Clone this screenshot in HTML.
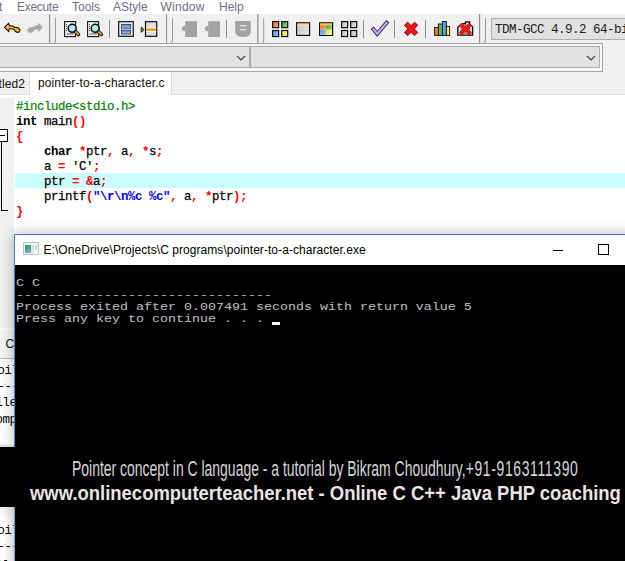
<!DOCTYPE html>
<html><head><meta charset="utf-8"><title>pointer-to-a-character.c - Dev-C++</title>
<style>
html,body{margin:0;padding:0;}
body{width:625px;height:561px;overflow:hidden;position:relative;background:#fff;font-family:"Liberation Sans",sans-serif;}
.abs{position:absolute;}
#menubar{left:0;top:0;width:625px;height:14px;background:#fff;}
#menubar span{position:absolute;top:0px;font-size:12px;line-height:14px;color:#6e6e84;white-space:nowrap;}
#toolbar{left:0;top:14px;width:625px;height:29px;background:#f0f0f0;}
.sep{position:absolute;width:1px;background:#a0a0a0;}
.grip{position:absolute;width:1px;background:#b8b8b8;}
#comborow{left:0;top:43px;width:625px;height:29px;background:#f0f0f0;}
.combo{position:absolute;top:3px;height:20px;background:#e1e1e1;border:1px solid #adadad;}
#tabrow{left:0;top:72px;width:625px;height:22px;background:#f0f0f0;border-bottom:1px solid #dcdcdc;}
.tab{position:absolute;font-size:12px;white-space:nowrap;color:#111;}
#editor{left:0;top:95px;width:625px;height:140px;background:#fff;}
#gutter{left:0;top:98px;width:14px;height:230px;background:#f0f0f0;}
.code{position:absolute;margin-top:1px;left:16px;height:15px;line-height:15px;font-family:"Liberation Mono",monospace;font-size:12.4px;letter-spacing:-0.44px;white-space:pre;color:#000;}
.code{-webkit-text-stroke:0.25px #000;}.code .k,.code .s,.code .q{-webkit-text-stroke:0;}.code .p{-webkit-text-stroke:0.2px #008000;}
.k{font-weight:bold;}
.s{color:#ff0000;font-weight:bold;}
.p{color:#008000;}
.q{color:#0000ff;font-weight:bold;}
#hl{left:15px;top:173px;width:610px;height:15px;background:#ccffff;}
#con{left:14px;top:234px;width:620px;height:213px;background:#000;border-left:1px solid #3a7bd5;border-top:1px solid #3a7bd5;box-shadow:0 0 13px rgba(0,0,0,0.30);}
#contitle{left:0;top:0;width:620px;height:30px;background:#fff;}
#contitle .t{position:absolute;left:28.5px;top:8px;font-size:12px;color:#000;white-space:nowrap;letter-spacing:0.06px;}
.cl{position:absolute;left:0.5px;height:12px;line-height:12px;font-family:"Liberation Mono",monospace;font-size:10.6px;color:#c0c0c0;white-space:pre;transform-origin:0 0;transform:scaleX(1.258);}
#banner{left:0;top:447px;width:625px;height:114px;background:#000;}
#b1{position:absolute;left:71.5px;top:9px;font-size:21.8px;line-height:26px;color:#d6d6d6;white-space:nowrap;transform-origin:0 0;transform:scaleX(0.640);}
#b2{position:absolute;left:30px;top:34px;font-size:20px;line-height:24px;font-weight:bold;color:#ebe4e4;white-space:nowrap;transform-origin:0 0;transform:scaleX(0.923);}
.lstrip{left:0;width:14px;background:#fff;overflow:hidden;border-right:1px solid #5a8fd8;}
.lt{position:absolute;font-family:"Liberation Mono",monospace;font-size:12.4px;letter-spacing:-0.44px;line-height:16px;color:#000;white-space:pre;}
</style></head><body>

<div id="menubar" class="abs">
<span style="left:-1px">t</span><span style="left:17px;letter-spacing:-0.3px">Execute</span><span style="left:72px">Tools</span><span style="left:113px">AStyle</span><span style="left:160.5px;letter-spacing:0.25px">Window</span><span style="left:219px">Help</span>
</div>

<div id="toolbar" class="abs">
<svg class="abs" style="left:0;top:0" width="625" height="29" viewBox="0 14 625 29">
<defs>
<linearGradient id="gblue" x1="0" y1="0" x2="0" y2="1"><stop offset="0" stop-color="#4f86e0"/><stop offset="1" stop-color="#a9c8f6"/></linearGradient>
<linearGradient id="gor" x1="0" y1="0" x2="1" y2="1"><stop offset="0" stop-color="#f06a18"/><stop offset="1" stop-color="#ffb070"/></linearGradient>
<linearGradient id="ggr" x1="0" y1="0" x2="1" y2="1"><stop offset="0" stop-color="#3aa028"/><stop offset="1" stop-color="#a0e080"/></linearGradient>
<linearGradient id="gbl" x1="0" y1="0" x2="1" y2="1"><stop offset="0" stop-color="#4a90e8"/><stop offset="1" stop-color="#a8d0ff"/></linearGradient>
<linearGradient id="gye" x1="0" y1="0" x2="1" y2="1"><stop offset="0" stop-color="#f0e020"/><stop offset="1" stop-color="#ffff90"/></linearGradient>
<linearGradient id="ggy" x1="0" y1="0" x2="1" y2="1"><stop offset="0" stop-color="#c4c4c4"/><stop offset="1" stop-color="#e6e6e6"/></linearGradient>
<radialGradient id="lens1"><stop offset="0" stop-color="#d8f4fb"/><stop offset="1" stop-color="#8fd6ee"/></radialGradient><radialGradient id="lens2"><stop offset="0" stop-color="#d4f8e8"/><stop offset="1" stop-color="#7fe4ba"/></radialGradient>
</defs>
<!-- undo -->
<path d="M4.5 27.3 L8.7 23.1 L9.3 25.9 C11.5 25.6 13.6 26 15 27.5 C17 27.2 19.2 28 20 29.6 C20.3 31 19 32.6 17.4 32.4 C15.8 32.2 14.6 31 14.2 29.7 C13 28.7 11 28.7 9.3 28.9 L8.7 31.7 Z" fill="#ffb224" stroke="#1c1200" stroke-width="1.1" stroke-linejoin="round"/>
<path d="M6 27.2 L8.3 25 L8.7 26.6 Z" fill="#ffd98a"/>
<!-- redo -->
<path d="M42.8 27.2 L38.4 22.8 L38 25.3 C36 25.1 34.6 25.5 33.4 27.1 C31 26.9 28 27.9 27.3 30 C27.1 31.7 28.6 32.9 30.4 32.7 C32.4 32.5 33.8 31.3 34.4 29.9 C35.5 29.4 36.8 29.4 38 29.6 L38.4 31.9 Z" fill="#a8a8a8"/>
<!-- separators -->
<rect x="49" y="14" width="1.2" height="29" fill="#8c8c8c"/>
<path d="M55.5 18 V42 H53.5" fill="none" stroke="#9a9a9a" stroke-width="1"/>
<rect x="109" y="20" width="1" height="18" fill="#8e8e8e"/>
<rect x="166" y="14" width="1.1" height="29" fill="#9c9c9c"/>
<path d="M172.5 18 V42 H170.5" fill="none" stroke="#9a9a9a" stroke-width="1"/>
<rect x="226" y="20" width="1" height="18" fill="#8e8e8e"/>
<rect x="257.3" y="14" width="1.2" height="29" fill="#8c8c8c"/>
<path d="M263.7 18 V42 H261.7" fill="none" stroke="#9a9a9a" stroke-width="1"/>
<rect x="363" y="20" width="1" height="18" fill="#8e8e8e"/>
<rect x="394" y="20" width="1" height="18" fill="#8e8e8e"/>
<rect x="425" y="20" width="1" height="18" fill="#8e8e8e"/>
<rect x="479" y="14" width="1.2" height="29" fill="#8c8c8c"/>
<path d="M485.5 18 V42 H483.5" fill="none" stroke="#9a9a9a" stroke-width="1"/>
<!-- search 1 -->
<g>
<rect x="64.6" y="21.6" width="11" height="15" fill="#f4f4f4" stroke="#111" stroke-width="1.1"/>
<path d="M66.6 24 V32" stroke="#444" stroke-width="1" stroke-dasharray="1 1"/>
<rect x="66.6" y="33" width="7.4" height="1.7" fill="#8a94a8"/>
<circle cx="72.2" cy="28.3" r="4" fill="url(#lens1)" stroke="#111" stroke-width="1.5"/>
<path d="M75.5 31.7 L78.4 34.5" stroke="#111" stroke-width="3.6" stroke-linecap="round"/>
<path d="M75.8 32 L78.3 34.4" stroke="#f0a020" stroke-width="1.8" stroke-linecap="round"/>
</g>
<!-- search 2 -->
<g>
<rect x="87.6" y="21.6" width="11" height="15" fill="#f4f4f4" stroke="#111" stroke-width="1.1"/>
<path d="M89.6 24 V32" stroke="#444" stroke-width="1" stroke-dasharray="1 1"/>
<rect x="89.6" y="33" width="7.4" height="1.7" fill="#8a94a8"/>
<circle cx="95.2" cy="28.3" r="4" fill="url(#lens2)" stroke="#111" stroke-width="1.5"/>
<path d="M98.5 31.7 L101.4 34.5" stroke="#111" stroke-width="3.6" stroke-linecap="round"/>
<path d="M98.8 32 L101.3 34.4" stroke="#f0a020" stroke-width="1.8" stroke-linecap="round"/>
</g>
<!-- two blue boxes -->
<rect x="118.7" y="21.7" width="14.6" height="14.6" fill="#f3efe8" stroke="#111" stroke-width="1.2"/>
<rect x="121.6" y="24.4" width="9" height="3.8" fill="url(#gblue)" stroke="#2a3c66" stroke-width="0.9"/>
<rect x="121.6" y="30.2" width="9" height="3.8" fill="url(#gblue)" stroke="#2a3c66" stroke-width="0.9"/>
<!-- goto line -->
<path d="M141.3 27 L144 29.7 L141.3 32.4 Z" fill="#c0a800" stroke="#181818" stroke-width="1"/>
<rect x="145.5" y="21.7" width="11.2" height="14.6" fill="#dedede" stroke="#111" stroke-width="1.2"/>
<rect x="146" y="27.4" width="10.2" height="1" fill="#fff"/>
<rect x="146" y="28.4" width="10.2" height="2.6" fill="#f0a000"/>
<rect x="146" y="31" width="10.2" height="1" fill="#fff"/>
<!-- gray icons -->
<path d="M185.2 21.2 H197 V37 H185.2 Z" fill="#a2a2a2"/>
<path d="M185.4 25.6 L183 26.4 L181.4 28.6 L183 30.8 L185.4 31.6 Z" fill="#a2a2a2"/>
<path d="M208.2 21.2 H220 V37 H208.2 Z" fill="#a2a2a2"/>
<path d="M208.4 25.6 L206 26.4 L204.4 28.6 L206 30.8 L208.4 31.6 Z" fill="#a2a2a2"/>
<path d="M235.2 21 H250.8 V31 C250.8 35 248 37 243 37 C238 37 235.2 35 235.2 31 Z" fill="#a2a2a2"/>
<rect x="240" y="25" width="6.4" height="1.3" fill="#e4e4e4"/>
<rect x="240" y="29" width="6.4" height="1.3" fill="#e4e4e4"/>
<!-- 4 color squares -->
<rect x="272.6" y="21.6" width="6" height="6" fill="url(#gor)" stroke="#111" stroke-width="1.2"/>
<rect x="281.7" y="21.6" width="6" height="6" fill="url(#ggr)" stroke="#111" stroke-width="1.2"/>
<rect x="272.6" y="30.5" width="6" height="6" fill="url(#gbl)" stroke="#111" stroke-width="1.2"/>
<rect x="281.7" y="30.5" width="6" height="6" fill="url(#gye)" stroke="#111" stroke-width="1.2"/>
<!-- window icon -->
<rect x="296.6" y="22.8" width="13" height="12.6" fill="url(#ggy)" stroke="#111" stroke-width="1.2"/>
<rect x="297.2" y="23.3" width="11.8" height="1.3" fill="#f0a000"/>
<rect x="297.2" y="24.6" width="11.8" height="0.8" fill="#fff"/>
<!-- color window icon -->
<rect x="319.6" y="22.8" width="13" height="12.6" fill="#fff" stroke="#111" stroke-width="1.2"/>
<rect x="320.2" y="23.3" width="11.8" height="1.3" fill="#f0a000"/>
<rect x="320.2" y="25.2" width="5.9" height="4.6" fill="url(#gor)"/>
<rect x="326.1" y="25.2" width="5.9" height="4.6" fill="url(#ggr)"/>
<rect x="320.2" y="29.8" width="5.9" height="5" fill="url(#gbl)"/>
<rect x="326.1" y="29.8" width="5.9" height="5" fill="url(#gye)"/>
<!-- 4 gray squares -->
<rect x="341.6" y="21.6" width="6" height="6" fill="url(#ggy)" stroke="#111" stroke-width="1.2"/>
<rect x="350.7" y="21.6" width="6" height="6" fill="url(#ggy)" stroke="#111" stroke-width="1.2"/>
<rect x="341.6" y="30.5" width="6" height="6" fill="url(#ggy)" stroke="#111" stroke-width="1.2"/>
<rect x="350.7" y="30.5" width="6" height="6" fill="url(#ggy)" stroke="#111" stroke-width="1.2"/>
<!-- check -->
<g fill="none" stroke-linecap="square" stroke-linejoin="miter">
<path d="M373.6 29.4 L377.2 33.8 L386.6 22.8" stroke="#2c2050" stroke-width="4"/>
<path d="M373.6 29.4 L377.2 33.8 L386.6 22.8" stroke="#c9aaf8" stroke-width="2.2"/>
</g>
<!-- red X -->
<path d="M404.4 25.2 L407.6 22.2 L411.1 25.6 L414.6 22.2 L417.8 25.2 L414.3 28.9 L417.8 32.6 L414.6 35.6 L411.1 32.2 L407.6 35.6 L404.4 32.6 L407.9 28.9 Z" fill="#f01414" stroke="#8a0000" stroke-width="0.9" stroke-linejoin="round"/>
<!-- bar chart -->
<rect x="434.6" y="27.4" width="3.8" height="8" fill="#f08030" stroke="#111" stroke-width="0.9"/>
<rect x="438.4" y="24" width="4" height="11.4" fill="#58c048" stroke="#111" stroke-width="0.9"/>
<rect x="442.4" y="21.6" width="4" height="13.8" fill="#58a0f0" stroke="#111" stroke-width="0.9"/>
<rect x="446.4" y="26.4" width="3.2" height="9" fill="#f8f060" stroke="#111" stroke-width="0.9"/>
<!-- delete profile -->
<path d="M457.8 35.2 V27.4 L461.4 24 L465.4 23.4 V21.8 H469.6 V24.4 L472.6 26.6 V35.2 Z" fill="#dcdcdc" stroke="#0c0c0c" stroke-width="1.3" stroke-linejoin="miter"/>
<path d="M461.4 27 V35 M465.4 24 V35 M469.4 26 V35" stroke="#222" stroke-width="1" stroke-dasharray="1.2 1"/>
<path d="M459.2 25.6 L461.8 23.2 L465.4 26.6 L469 23.2 L471.6 25.6 L468.1 29.1 L471.6 32.6 L469 35 L465.4 31.6 L461.8 35 L459.2 32.6 L462.7 29.1 Z" fill="#f41414" stroke="#c00000" stroke-width="0.6" stroke-linejoin="round"/>
</svg>
<div class="abs" style="left:491px;top:4px;width:140px;height:20px;background:#e1e1e1;border:1px solid #adadad"></div>
<span class="abs" style="left:495px;top:9px;font-family:'Liberation Mono',monospace;font-size:12.6px;letter-spacing:-0.56px;line-height:14px;white-space:pre;color:#1a1a1a">TDM-GCC 4.9.2 64-bit Release</span>
</div>

<div id="comborow" class="abs">
<div class="abs" style="left:0;top:0;width:603px;height:1px;background:#a2a2a2"></div>
<div class="abs" style="left:0;top:1px;width:602px;height:27px;background:#f7f7f7"></div>
<div class="abs" style="left:602px;top:0;width:1px;height:29px;background:#a2a2a2"></div>
<div class="abs" style="left:0;top:28px;width:603px;height:1px;background:#a6a6a6"></div>
<div class="combo" style="left:-5px;width:253px"></div>
<div class="combo" style="left:250px;width:348px"></div>
<svg class="abs" style="left:236px;top:12px" width="10" height="7" viewBox="0 0 10 7"><path d="M1 1 L5 5 L9 1" fill="none" stroke="#444" stroke-width="1.15"/></svg>
<svg class="abs" style="left:586px;top:12px" width="10" height="7" viewBox="0 0 10 7"><path d="M1 1 L5 5 L9 1" fill="none" stroke="#444" stroke-width="1.15"/></svg>
</div>

<div id="tabrow" class="abs">
<div class="abs" style="left:0;top:1px;width:30px;height:21px;background:#f0f0f0;border-right:1px solid #d9d9d9;box-sizing:border-box"></div>
<div class="abs" style="left:30px;top:0;width:142px;height:23px;background:#fff;border-right:1px solid #d9d9d9;box-sizing:border-box"></div>
<span class="tab" style="left:-1.5px;top:5px;letter-spacing:0.1px">tled2</span>
<span class="tab" style="left:38px;top:4px;letter-spacing:0.11px">pointer-to-a-character.c</span>
</div>

<div id="editor" class="abs"></div>
<div id="gutter" class="abs"></div>
<div id="hl" class="abs"></div>
<div class="code" style="top:99px"><span class="p">#include&lt;stdio.h&gt;</span></div>
<div class="code" style="top:114px"><span class="k">int</span> main<span class="s">()</span></div>
<div class="code" style="top:129px"><span class="s">{</span></div>
<div class="code" style="top:144px">    <span class="k">char</span> <span class="s">*</span>ptr<span class="s">,</span> a<span class="s">,</span> <span class="s">*</span>s<span class="s">;</span></div>
<div class="code" style="top:159px">    a <span class="s">=</span> 'C'<span class="s">;</span></div>
<div class="code" style="top:174px">    ptr <span class="s">=</span> <span class="s">&amp;</span>a<span class="s">;</span></div>
<div class="code" style="top:189px">    printf<span class="s">(</span><span class="q">"\r\n%c %c"</span><span class="s">,</span> a<span class="s">,</span> <span class="s">*</span>ptr<span class="s">);</span></div>
<div class="code" style="top:204px"><span class="s">}</span></div>

<!-- fold marker -->
<div class="abs" style="left:-2px;top:129px;width:7.5px;height:11px;border:1px solid #000;background:#fff"></div>
<div class="abs" style="left:0;top:135px;width:5px;height:1px;background:#000"></div>
<div class="abs" style="left:1px;top:142px;width:1px;height:69px;background:#000"></div>
<div class="abs" style="left:1px;top:210px;width:7px;height:1px;background:#000"></div>

<!-- left strip of IDE below -->
<div class="abs lstrip" style="top:328px;height:119px;">
 <div class="abs" style="left:0;top:0;width:14px;height:2px;background:#fbfbfb"></div>
 <div class="abs" style="left:0;top:2px;width:14px;height:28px;background:#f3f3f3"></div>
 <div class="abs" style="left:0;top:30px;width:14px;height:1px;background:#b6b6b6"></div>
 <span class="abs" style="left:5.5px;top:8.5px;font-size:12px;line-height:14px;color:#111">C</span>
 <span class="lt" style="left:-2.5px;top:35px">oil</span>
 <span class="lt" style="left:-2.5px;top:51px">---</span>
 <span class="lt" style="left:-4.5px;top:67px">ile</span>
 <span class="lt" style="left:-4.5px;top:83.5px">omp</span>
 <div class="abs" style="left:0;top:116px;width:14px;height:3px;background:linear-gradient(#f4f4f4,#d8d8d8)"></div>
</div>

<!-- console window -->
<div id="con" class="abs">
 <div id="contitle" class="abs">
  <svg class="abs" style="left:8px;top:7px" width="16" height="13" viewBox="0 0 16 13"><defs><linearGradient id="cg" x1="0" y1="0" x2="0.6" y2="1"><stop offset="0" stop-color="#2f8f62"/><stop offset="1" stop-color="#79afc6"/></linearGradient></defs><rect x="0.5" y="0.5" width="15" height="12" fill="#f6f6f6" stroke="#bdbdbd"/><rect x="2" y="3" width="6" height="8" fill="url(#cg)"/><rect x="8" y="3" width="3" height="8" fill="#d5e4e4"/><rect x="12" y="3" width="2" height="5" fill="#cfdada"/></svg>
  <span class="t">E:\OneDrive\Projects\C programs\pointer-to-a-character.exe</span>
  <div class="abs" style="left:538px;top:15px;width:10px;height:1px;background:#000"></div>
  <div class="abs" style="left:583px;top:9px;width:9px;height:9px;border:1px solid #000"></div>
 </div>
 <div class="cl" style="top:42px">C C</div>
 <div class="cl" style="top:54px">--------------------------------</div>
 <div class="cl" style="top:66px">Process exited after 0.007491 seconds with return value 5</div>
 <div class="cl" style="top:78px">Press any key to continue . . . </div>
 <div class="abs" style="left:256.5px;top:87px;width:8px;height:3.4px;background:#f4f4f4"></div>
</div>

<!-- banner -->
<div id="banner" class="abs">
 <div id="b1">Pointer concept in C language - a tutorial by Bikram Choudhury,<span style="letter-spacing:1px">+91-9163111390</span></div>
 <div id="b2">www.onlinecomputerteacher.net - Online C C++ Java PHP coaching</div>
</div>

<div class="abs lstrip" style="top:507px;height:54px;border-right-color:#6f9de4">
 <div class="abs" style="left:0;top:0;width:14px;height:12px;background:linear-gradient(#efefef,#fff)"></div>
 <div class="abs" style="left:4px;top:0;width:10px;height:54px;background:linear-gradient(to right,rgba(0,0,0,0),rgba(0,0,0,0.16))"></div>
 <span class="lt" style="left:-2.5px;top:16px">oil</span>
 <span class="lt" style="left:-2.5px;top:32px">---</span>
 <span class="lt" style="left:-4.5px;top:50.5px">ile</span>
</div>

</body></html>
